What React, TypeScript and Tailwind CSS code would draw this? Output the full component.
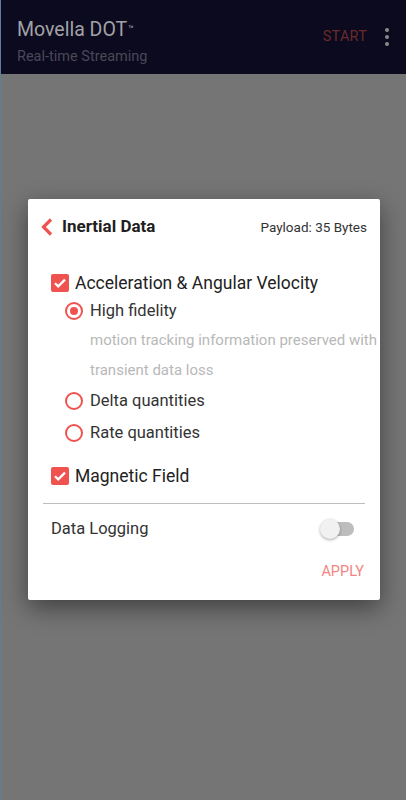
import React, { useState } from 'react';

const RED = '#ef5350';

const Checkbox: React.FC<{ checked: boolean }> = ({ checked }) => (
  <span
    className={`flex h-[18px] w-[18px] items-center justify-center rounded-[2px] ${
      checked ? 'bg-[#ef5350]' : 'border-2 border-[#757575]'
    }`}
  >
    {checked && (
      <svg viewBox="0 0 18 18" className="h-[18px] w-[18px]">
        <path d="M4 9.2l3.2 3.2L14 5.6" fill="none" stroke="#fff" strokeWidth="2.2" />
      </svg>
    )}
  </span>
);

const Radio: React.FC<{ checked: boolean }> = ({ checked }) => (
  <span className="flex h-[18px] w-[18px] items-center justify-center rounded-full border-2 border-[#ef5350]">
    {checked && <span className="h-[8px] w-[8px] rounded-full bg-[#ef5350]" />}
  </span>
);

export default function App() {
  const [mode, setMode] = useState<'high' | 'delta' | 'rate'>('high');
  const [acc, setAcc] = useState(true);
  const [mag, setMag] = useState(true);
  const [logging, setLogging] = useState(false);

  const radios: { id: 'high' | 'delta' | 'rate'; label: string }[] = [
    { id: 'delta', label: 'Delta quantities' },
    { id: 'rate', label: 'Rate quantities' },
  ];

  return (
    <div
      className="flex h-[800px] w-[406px] flex-col border-l border-[#5f7d99] bg-[#757575]"
      style={{ fontFamily: 'Roboto, "Noto Sans", sans-serif' }}
    >
      {/* App bar (dimmed by the dialog scrim) */}
      <header className="flex h-[74px] shrink-0 items-center justify-between bg-[#0c0a1e] pl-[16px] pr-[17px]">
        <div className="flex flex-col pt-[10px]">
          <div className="text-[19.5px] leading-[24px] text-[#a2a2a6]">
            Movella DOT<sup className="ml-px text-[9px]">™</sup>
          </div>
          <div className="mt-[6px] text-[14.5px] leading-[18px] text-[#4a4858]">Real-time Streaming</div>
        </div>
        <div className="flex items-center gap-[18px]">
          <span className="text-[14.5px] tracking-[0.2px] text-[#6a2a2c]">START</span>
          <span className="flex flex-col gap-[3px]">
            <span className="h-[4px] w-[4px] rounded-full bg-[#8a8a8e]" />
            <span className="h-[4px] w-[4px] rounded-full bg-[#8a8a8e]" />
            <span className="h-[4px] w-[4px] rounded-full bg-[#8a8a8e]" />
          </span>
        </div>
      </header>

      <main className="flex-1 pl-[27px] pt-[125px]">
        <div className="w-[352px] overflow-hidden rounded-[2px] bg-white pb-[14px] pt-[14px] shadow-[0_8px_24px_rgba(0,0,0,0.45)]">
          {/* Header */}
          <div className="flex h-[28px] items-center justify-between pl-[12px] pr-[13px]">
            <div className="flex items-center">
              <svg viewBox="0 0 13 18" className="h-[18px] w-[13px]">
                <path d="M11 1.5L3.5 9l7.5 7.5" fill="none" stroke={RED} strokeWidth="3.2" />
              </svg>
              <span className="ml-[9px] text-[17px] font-bold text-[#1f1f1f]">Inertial Data</span>
            </div>
            <span className="text-[13.5px] text-[#333]">Payload: 35 Bytes</span>
          </div>

          <div className="mt-[29px] pl-[23px]">
            <button className="flex h-[26px] items-center gap-[6px]" onClick={() => setAcc(!acc)}>
              <Checkbox checked={acc} />
              <span className="text-[17.5px] text-[#222]">Acceleration &amp; Angular Velocity</span>
            </button>

            <div className="pl-[14px]">
              <button className="flex h-[30px] items-center gap-[7px]" onClick={() => setMode('high')}>
                <Radio checked={mode === 'high'} />
                <span className="text-[16.5px] text-[#333]">High fidelity</span>
              </button>
              <div className="whitespace-nowrap pl-[25px] text-[15px] leading-[29.5px] text-[#b8b8b8]">
                motion tracking information preserved with
                <br />
                transient data loss
              </div>
              {radios.map((r) => (
                <button key={r.id} className="flex h-[32px] items-center gap-[7px]" onClick={() => setMode(r.id)}>
                  <Radio checked={mode === r.id} />
                  <span className="text-[16.5px] text-[#333]">{r.label}</span>
                </button>
              ))}
            </div>

            <button className="mt-[13px] flex h-[28px] items-center gap-[6px]" onClick={() => setMag(!mag)}>
              <Checkbox checked={mag} />
              <span className="text-[17.5px] text-[#222]">Magnetic Field</span>
            </button>
          </div>

          <div className="mx-[15px] mt-[13px] h-px bg-[#bdbdbd]" />

          <div className="flex h-[50px] items-center justify-between pl-[23px] pr-[26px]">
            <span className="text-[16.5px] text-[#333]">Data Logging</span>
            <button className="relative h-[20px] w-[34px]" onClick={() => setLogging(!logging)}>
              <span className="absolute left-[3px] top-[3px] h-[14px] w-[31px] rounded-full bg-[#bdbdbd]" />
              <span
                className={`absolute top-0 h-[20px] w-[20px] rounded-full bg-[#f1f1f1] shadow-[0_1px_3px_rgba(0,0,0,0.35)] ${
                  logging ? 'left-[14px]' : 'left-0'
                }`}
              />
            </button>
          </div>

          <div className="mt-[4px] flex h-[28px] items-center justify-end pr-[16px]">
            <span className="text-[14.5px] text-[#f28583]">APPLY</span>
          </div>
        </div>
      </main>
    </div>
  );
}
